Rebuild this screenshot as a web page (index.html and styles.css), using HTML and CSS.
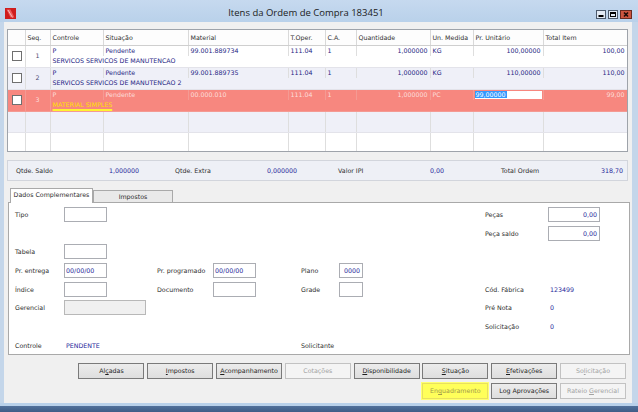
FILE: index.html
```html
<!DOCTYPE html>
<html>
<head>
<meta charset="utf-8">
<title>Itens da Ordem de Compra 183451</title>
<link rel="stylesheet" href="styles.css">
</head>
<body>
<div class="window">
  <div class="titlebar">
    <svg class="appicon" width="11" height="11" viewBox="0 0 11 11">
      <rect x="0" y="0" width="11" height="11" fill="#cf1d1d"/>
      <path d="M1.5 1.5 L5.5 1.5 L9.5 9.5 L5.5 9.5 Z" fill="#ee5a5a"/>
      <path d="M3 2 L7.5 9.5" stroke="#fbd0d0" stroke-width="0.8"/>
    </svg>
    <div class="title">Itens da Ordem de Compra 183451</div>
    <div class="wctl">
      <svg width="10" height="9" viewBox="0 0 10 9"><rect x="0.5" y="0.5" width="9" height="8" fill="#e2eaf4" stroke="#4c5a6c"/><rect x="2.5" y="5" width="5" height="2" fill="#000"/></svg>
      <svg width="10" height="9" viewBox="0 0 10 9"><rect x="0.5" y="0.5" width="9" height="8" fill="#e2eaf4" stroke="#4c5a6c"/><rect x="2.5" y="2.5" width="5" height="4" fill="none" stroke="#000"/><rect x="2" y="2" width="6" height="2" fill="#000"/></svg>
      <svg width="12" height="9" viewBox="0 0 12 9"><rect x="0.5" y="0.5" width="11" height="8" fill="#cc553f" stroke="#6a2a20"/><path d="M4 2.5 L8 6.5 M8 2.5 L4 6.5" stroke="#1c0c08" stroke-width="1.6"/></svg>
    </div>
  </div>
  <div class="frame">
    <div class="content">
      <div class="grid">
        <table class="items">
          <colgroup>
            <col class="w18"><col class="w25"><col class="w53"><col class="w85"><col class="w100"><col class="w37"><col class="w31"><col class="w74"><col class="w43"><col class="w70"><col class="w83">
          </colgroup>
          <thead>
            <tr><th></th><th>Seq.</th><th>Controle</th><th>Situação</th><th>Material</th><th>T.Oper.</th><th>C.A.</th><th>Quantidade</th><th>Un. Medida</th><th>Pr. Unitário</th><th>Total Item</th></tr>
          </thead>
          <tbody>
            <tr class="l1 odd"><td rowspan="2" class="chk"><span class="cb"></span></td><td rowspan="2" class="seq">1</td><td>P</td><td>Pendente</td><td>99.001.889734</td><td>111.04</td><td>1</td><td class="num">1,000000</td><td>KG</td><td class="num">100,00000</td><td class="num">100,00</td></tr>
            <tr class="l2 odd"><td colspan="9" class="desc">SERVICOS SERVICOS DE MANUTENCAO</td></tr>
            <tr class="l1 even"><td rowspan="2" class="chk"><span class="cb"></span></td><td rowspan="2" class="seq">2</td><td>P</td><td>Pendente</td><td>99.001.889735</td><td>111.04</td><td>1</td><td class="num">1,000000</td><td>KG</td><td class="num">110,00000</td><td class="num">110,00</td></tr>
            <tr class="l2 even"><td colspan="9" class="desc">SERVICOS SERVICOS DE MANUTENCAO 2</td></tr>
            <tr class="l1 red"><td rowspan="2" class="chk"><span class="cb"></span></td><td rowspan="2" class="seq">3</td><td>P</td><td>Pendente</td><td>00.000.010</td><td>111.04</td><td>1</td><td class="num">1,000000</td><td>PC</td><td class="edit"><div class="editbox"><span class="sel">99,00000</span></div></td><td class="num">99,00</td></tr>
            <tr class="l2 red"><td colspan="9" class="desc"><span class="mark">MATERIAL SIMPLES</span></td></tr>
            <tr class="empty even"><td></td><td></td><td></td><td></td><td></td><td></td><td></td><td></td><td></td><td></td><td></td></tr>
            <tr class="empty odd"><td></td><td></td><td></td><td></td><td></td><td></td><td></td><td></td><td></td><td></td><td></td></tr>
          </tbody>
        </table>
      </div>

      <div class="summary">
        <span class="lbl">Qtde. Saldo</span><span class="val">1,000000</span>
        <span class="lbl">Qtde. Extra</span><span class="val">0,000000</span>
        <span class="lbl">Valor IPI</span><span class="val">0,00</span>
        <span class="lbl">Total Ordem</span><span class="val">318,70</span>
      </div>

      <div class="tabs">
        <div class="tab active">Dados Complementares</div>
        <div class="tab">Impostos</div>
      </div>
      <div class="panel">
        <div class="form">
          <span class="lbl r1 c1">Tipo</span><span class="inp r1 c2"></span>
          <span class="lbl r1 c10">Peças</span><span class="inp right r1 c11">0,00</span>
          <span class="lbl r2 c10">Peça saldo</span><span class="inp right r2 c11">0,00</span>
          <span class="lbl r3 c1">Tabela</span><span class="inp r3 c2"></span>
          <span class="lbl r4 c1">Pr. entrega</span><span class="inp r4 c2">00/00/00</span>
          <span class="lbl r4 c4">Pr. programado</span><span class="inp r4 c5">00/00/00</span>
          <span class="lbl r4 c7">Plano</span><span class="inp right r4 c8">0000</span>
          <span class="lbl r5 c1">Índice</span><span class="inp r5 c2"></span>
          <span class="lbl r5 c4">Documento</span><span class="inp r5 c5"></span>
          <span class="lbl r5 c7">Grade</span><span class="inp r5 c8"></span>
          <span class="lbl r5 c10">Cód. Fábrica</span><span class="val r5 c11">123499</span>
          <span class="lbl r6 c1">Gerencial</span><span class="inp dis wide r6 c2"></span>
          <span class="lbl r6 c10">Pré Nota</span><span class="val r6 c11">0</span>
          <span class="lbl r7 c10">Solicitação</span><span class="val r7 c11">0</span>
          <span class="lbl r8 c1">Controle</span><span class="val span r8 c2">PENDENTE</span>
          <span class="lbl span r8 c7">Solicitante</span>
        </div>
      </div>

      <div class="buttons">
        <div class="brow">
          <span class="btn">Al<u>ç</u>adas</span>
          <span class="btn"><u>I</u>mpostos</span>
          <span class="btn"><u>A</u>companhamento</span>
          <span class="btn off">Cotações</span>
          <span class="btn"><u>D</u>isponibilidade</span>
          <span class="btn"><u>S</u>ituação</span>
          <span class="btn"><u>E</u>fetivações</span>
          <span class="btn off">So<u>l</u>icitação</span>
        </div>
        <div class="brow">
          <span class="btn off hl">En<u>q</u>uadramento</span>
          <span class="btn">Log Aprovações</span>
          <span class="btn off">Rateio <u>G</u>erencial</span>
        </div>
      </div>
    </div>
  </div>
  <div class="bottomframe"></div>
</div>
</body>
</html>
```

FILE: styles.css
```css
* { box-sizing: border-box; }
html, body { margin: 0; padding: 0; }
body {
  width: 638px;
  height: 412px;
  overflow: hidden;
  font-family: "DejaVu Sans", sans-serif;
  font-size: 6.3px;
  color: #2a2a2a;
  background: #b9d1ea;
}
.window {
  width: 638px;
  height: 412px;
  display: flex;
  flex-direction: column;
  background: #b9d1ea;
}

/* title bar */
.titlebar {
  height: 22px;
  flex: none;
  display: flex;
  align-items: flex-start;
  padding: 0 6px 0 5px;
  background: linear-gradient(#c6d9ef, #b9d1ea);
}
.appicon { display: block; margin-top: 8px; flex: none; }
.title {
  flex: 1;
  text-align: center;
  font-family: "Open Sans", "DejaVu Sans", sans-serif;
  font-size: 9.5px;
  line-height: 12px;
  margin-top: 7px;
  color: #1b1b1b;
}
.wctl { display: flex; gap: 2px; margin-top: 10px; flex: none; }
.wctl svg { display: block; }

/* frame */
.frame {
  height: 381px;
  flex: none;
  padding: 0 6px 0 4px;
  background: #c4d6ea;
}
.content {
  width: 628px;
  height: 381px;
  background: #f0f0f0;
  padding-top: 7px;
  display: flex;
  flex-direction: column;
}
.bottomframe {
  height: 9px;
  flex: none;
  background: linear-gradient(#b9d1ea 0 3px, #52719b 3px, #3e5c86);
}

/* grid */
.grid {
  margin-left: 3px;
  width: 621px;
  height: 123px;
  border: 1px solid #9ea3aa;
  background: #ffffff;
  overflow: hidden;
  flex: none;
}
.items {
  border-collapse: collapse;
  table-layout: fixed;
  width: 619px;
}
.w18 { width: 17px; }
.w25 { width: 25px; }
.w53 { width: 53px; }
.w85 { width: 85px; }
.w100 { width: 100px; }
.w37 { width: 37px; }
.w31 { width: 31px; }
.w74 { width: 74px; }
.w43 { width: 43px; }
.w70 { width: 70px; }
.w83 { width: 84px; }
.items th {
  height: 15px;
  font-weight: normal;
  text-align: left;
  padding: 1px 2px 0;
  color: #303030;
  border-right: 1px solid #d9d9d9;
  border-bottom: 1px solid #cfcfcf;
  white-space: nowrap;
  overflow: hidden;
  background: #fdfdfd;
}
.items td {
  padding: 0 2px;
  line-height: 10px;
  height: 11px;
  white-space: nowrap;
  overflow: hidden;
  color: #1e1e84;
  border-right: 1px solid #dedede;
  vertical-align: middle;
}
.items td.num { text-align: right; }
.items tr.l2 td { border-bottom: 1px solid #e3e3ea; }
.items td.chk, .items td.seq { border-bottom: 1px solid #e3e3ea; }
.items td.seq { text-align: center; color: #4a4a70; }
.items td.desc { border-right: none; }
.items tr.empty td { height: 21px; border-bottom: 1px solid #e3e3ea; }
.odd { background: #ffffff; }
.even { background: #eff0f8; }
.red { background: #f7877f; }
.items tr.red td { color: #fcdedb; border-color: #f49a93; }
.cb {
  display: block;
  width: 10px;
  height: 10px;
  margin-left: 2px;
  border: 1px solid #6f6f6f;
  background: #ffffff;
}
.items td.edit { padding: 0; vertical-align: top; }
.editbox {
  margin: 1px 1px 0 1px;
  height: 8px;
  background: #ffffff;
  line-height: 8px;
}
.sel { background: #3399ff; color: #ffffff; padding: 0 1px; }
.mark {
  color: #ffe000;
  text-decoration: underline;
  text-decoration-color: #fff230;
  text-decoration-thickness: 2px;
  text-underline-offset: 2px;
}

/* summary */
.summary {
  margin: 8px 0 0 3px;
  width: 621px;
  height: 21px;
  flex: none;
  border: 1px solid #d2d5dc;
  background: #eef0f6;
  display: grid;
  grid-template-columns: 93px 66px 92px 71px 92px 71px 1fr auto;
  align-items: center;
  padding: 0 4px 0 8px;
}
.summary .lbl { color: #2d2d2d; }
.summary .val { color: #26269a; }

/* tabs */
.tabs {
  margin: 7px 0 0 6px;
  height: 14px;
  display: flex;
  align-items: flex-end;
  flex: none;
  position: relative;
  z-index: 1;
}
.tab {
  height: 12px;
  width: 80px;
  border: 1px solid #a9a9a9;
  border-bottom: none;
  background: #e9e9e9;
  text-align: center;
  line-height: 11px;
  color: #2d2d2d;
}
.tab.active {
  width: 83px;
  height: 15px;
  margin-bottom: -1px;
  background: #ffffff;
  line-height: 12px;
}

/* panel */
.panel {
  margin-left: 4px;
  width: 622px;
  height: 153px;
  flex: none;
  border: 1px solid #a9a9a9;
  background: #ffffff;
  padding: 4px 0 0 6px;
}
.form {
  display: grid;
  grid-template-columns: 49px 43px 50px 56px 43px 45px 38px 24px 122px 63px 52px;
  grid-template-rows: repeat(8, 15px);
  row-gap: 3.7px;
}
.form .lbl { align-self: center; white-space: nowrap; color: #2d2d2d; }
.form .val { align-self: center; white-space: nowrap; color: #26269a; padding-left: 2px; }
.inp {
  height: 15px;
  border: 1px solid #abadb3;
  background: #ffffff;
  color: #26269a;
  line-height: 13px;
  padding: 0 1px;
  white-space: nowrap;
}
.inp.right { text-align: right; padding-right: 2px; }
.inp.dis { background: #f0f0f0; border-color: #b8b8b8; }
.inp.wide { grid-column: 2 / 5; width: 82px; }
.span { grid-column-end: span 3; }
.r1 { grid-row: 1; } .r2 { grid-row: 2; } .r3 { grid-row: 3; } .r4 { grid-row: 4; }
.r5 { grid-row: 5; } .r6 { grid-row: 6; } .r7 { grid-row: 7; } .r8 { grid-row: 8; }
.c1 { grid-column-start: 1; } .c2 { grid-column-start: 2; } .c4 { grid-column-start: 4; }
.c5 { grid-column-start: 5; } .c7 { grid-column-start: 7; } .c8 { grid-column-start: 8; }
.c10 { grid-column-start: 10; } .c11 { grid-column-start: 11; }

/* buttons */
.buttons {
  margin-top: 8px;
  display: flex;
  flex-direction: column;
  gap: 4px;
  padding-right: 6px;
  flex: none;
}
.brow {
  display: flex;
  justify-content: flex-end;
  gap: 2.8px;
}
.btn {
  width: 66px;
  height: 16px;
  border: 1px solid #7a7a7a;
  background: linear-gradient(#ececec, #dedede);
  text-align: center;
  line-height: 14px;
  color: #1e1e1e;
  white-space: nowrap;
}
.btn u { text-decoration-thickness: 0.6px; text-underline-offset: 1px; }
.btn.off {
  border-color: #c2c2c2;
  background: #f4f4f4;
  color: #a3a3a3;
}
.btn.hl {
  background: #ffff5a;
  border-color: #e8e060;
  color: #a29a4a;
  box-shadow: 0 0 0 1px #ffff70;
}
```
